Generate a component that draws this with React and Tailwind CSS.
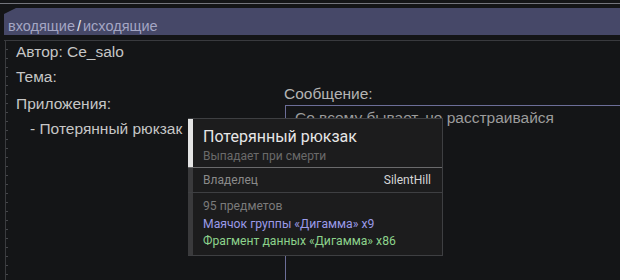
export default function App() {
  return (
    <div className="relative flex h-[280px] w-[620px] flex-col overflow-hidden bg-[#141517] font-['Liberation_Sans',Arial,sans-serif] text-[15.5px] text-[#c6c6c6]">
      <div className="h-[3px] shrink-0" />
      <div className="h-px shrink-0 bg-[#74757c]" />
      <div className="h-[4px] shrink-0" />
      <div className="ml-[4px] flex h-[27px] shrink-0 items-end bg-[#464868] pb-0 pl-[4px] text-[14.5px] leading-[18px] text-[#a4a6c4] [clip-path:polygon(12px_0,100%_0,100%_100%,0_100%,0_6px)]">
        <span>входящие</span>
        <span className="mx-[2px] text-[#e8e8f0]">/</span>
        <span>исходящие</span>
      </div>
      <div className="h-[5px] shrink-0" />
      <div className="ml-[4px] h-px shrink-0 bg-[#393a3e]" />
      <div className="flex flex-1">
        <div className="ml-[5px] w-[3px] border-l border-[#3a3b3e] bg-[repeating-linear-gradient(to_bottom,transparent_0_8px,#45464a_8px_9px)]" />
        <div className="flex w-[276px] flex-col pl-[8px]">
          <div className="flex h-[22px] items-center">Автор: Ce_salo</div>
          <div className="mt-[3px] flex h-[22px] items-center">Тема:</div>
          <div className="mt-[5px] flex h-[22px] items-center">Приложения:</div>
          <div className="mt-[3px] flex h-[22px] items-center pl-[14px]">- Потерянный рюкзак</div>
        </div>
        <div className="flex flex-1 flex-col pt-[43px]">
          <div className="flex h-[20px] items-center text-[#b4b4b4]">Сообщение:</div>
          <div className="ml-px mt-px flex-1 border-l border-t border-[#6c6e98] pl-[9px] pt-[3px] leading-[18px] text-[#9c9c9c]">
            Со всему бывает, не расстраивайся
          </div>
        </div>
      </div>

      <div className="absolute left-[188px] top-[118px] flex h-[138px] w-[255px] flex-col border-b border-r border-t border-[#3e3f42] bg-[#1c1c1d] font-['Roboto',Arial,sans-serif]">
        <div className="flex h-[49px] border-b border-[#6a6a6c]">
          <div className="w-[5px] bg-[#e4e4e4]" />
          <div className="flex flex-col pl-[10px] pt-[8px]">
            <div className="text-[16px] leading-[20px] text-[#e6e6e6]">Потерянный рюкзак</div>
            <div className="mt-px text-[12px] leading-[16px] text-[#6a6a6a]">Выпадает при смерти</div>
          </div>
        </div>
        <div className="flex h-[25px] border-b border-[#3e3f42]">
          <div className="w-[5px] bg-[#3a3a3c]" />
          <div className="flex flex-1 items-center justify-between pl-[10px] pr-[11px] text-[12px]">
            <span className="text-[#8a8a8a]">Владелец</span>
            <span className="text-[#d6d6d6]">SilentHill</span>
          </div>
        </div>
        <div className="flex flex-1">
          <div className="w-[5px] bg-[#3a3a3c]" />
          <div className="flex flex-col pl-[10px] pt-[5px] text-[12.2px] leading-[17.5px]">
            <span className="text-[#7a7a7a]">95 предметов</span>
            <span className="text-[#9a9ae8]">Маячок группы «Дигамма» x9</span>
            <span className="text-[#8cd28c]">Фрагмент данных «Дигамма» x86</span>
          </div>
        </div>
      </div>
    </div>
  )
}
